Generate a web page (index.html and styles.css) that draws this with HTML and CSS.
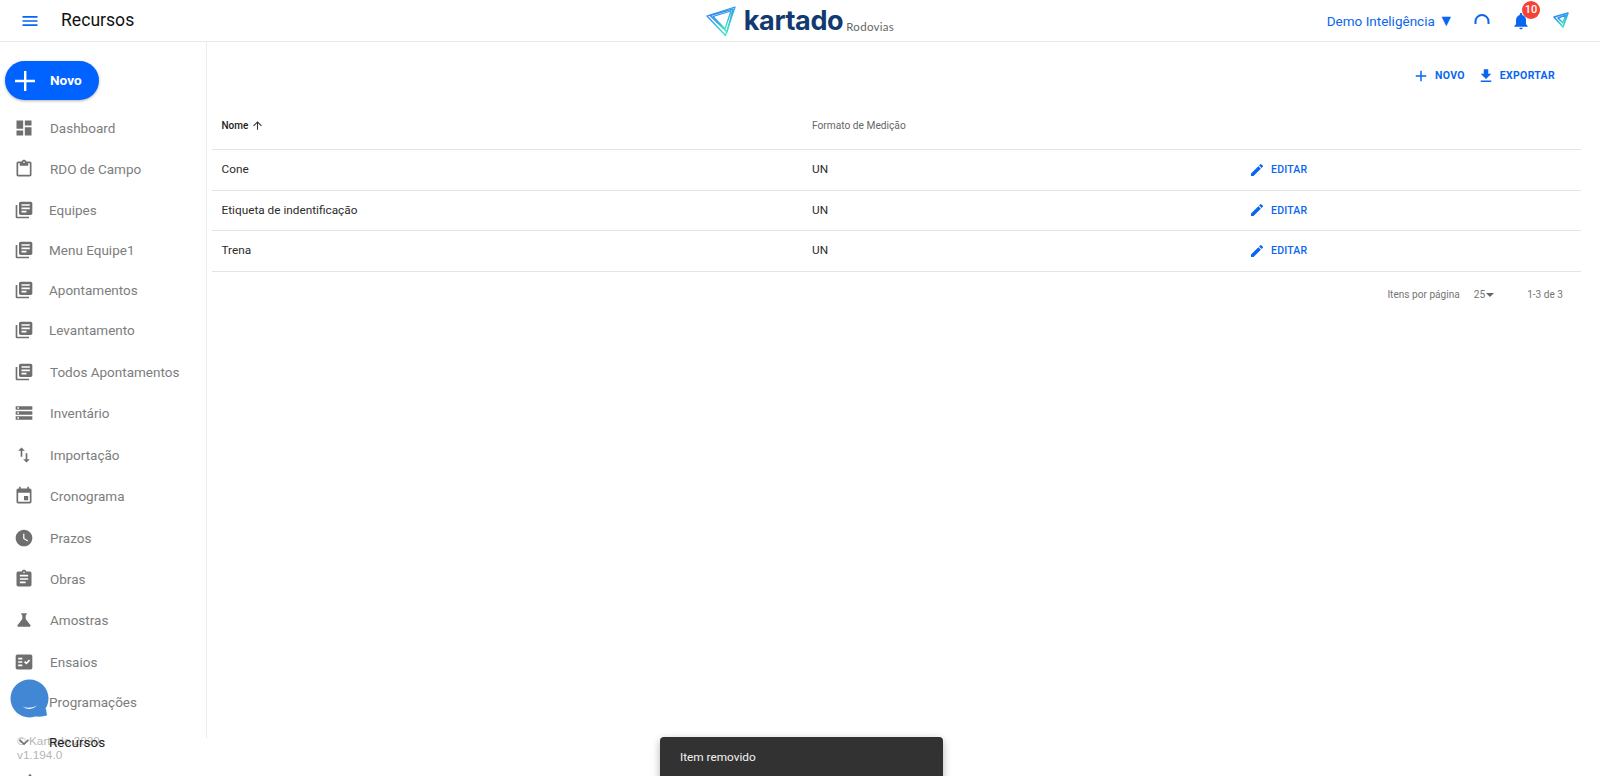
FILE: index.html
```html
<!DOCTYPE html>
<html lang="pt-BR">
<head>
<meta charset="utf-8">
<title>Recursos</title>
<link rel="stylesheet" href="styles.css">
</head>
<body>
<svg class="defs" aria-hidden="true">
  <defs>
    <linearGradient id="tri" x1="0" y1="0" x2="0.6" y2="1">
      <stop offset="0" stop-color="#2b78f5"/>
      <stop offset="0.55" stop-color="#2fa9e8"/>
      <stop offset="1" stop-color="#3fe3c4"/>
    </linearGradient>
    <symbol id="i-lib" viewBox="0 0 24 24"><path d="M4 6H2v14c0 1.100.9 2 2 2h14v-2H4V6zm16-4H8c-1.100 0-2 .9-2 2v12c0 1.100.9 2 2 2h12c1.100 0 2-.9 2-2V4c0-1.100-.9-2-2-2zm-1 9H9V9h10v2zm-4 4H9v-2h6v2zm4-8H9V5h10v2z"/></symbol>
    <symbol id="i-edit" viewBox="0 0 24 24"><path d="M3 17.250V21h3.750L17.810 9.940l-3.750-3.750L3 17.250zM20.710 7.040a1 1 0 0 0 0-1.410l-2.340-2.340a1 1 0 0 0-1.410 0l-1.830 1.830 3.750 3.750 1.830-1.830z"/></symbol>
  </defs>
</svg>

<header class="topbar">
  <div class="top-left">
    <svg class="menu-icon" viewBox="0 0 24 24"><path d="M3 18h18v-2H3v2zm0-5h18v-2H3v2zm0-7v2h18V6H3z"/></svg>
    <h1 class="page-title">Recursos</h1>
  </div>
  <div class="logo">
    <svg class="logo-mark" viewBox="0 0 30 30" fill="none" stroke="url(#tri)" stroke-width="1.300" stroke-linejoin="round">
      <path d="M1 10 L29 1 L19.500 29.500 Z"/>
      <path d="M4 9.500 L27 3 L21 26 Z"/>
      <path d="M7 10.500 L25 5 L19 23 Z"/>
    </svg>
    <span class="logo-name">kartado</span>
    <span class="logo-sub">Rodovias</span>
  </div>
  <div class="top-right">
    <span class="company">Demo Inteligência <span class="company-arrow">▼</span></span>
    <svg class="arc-icon" viewBox="0 0 16 16" fill="none"><path d="M1.500 11 V8.500 A6.500 6.500 0 0 1 14.500 8.500 V11" stroke-width="2"/></svg>
    <span class="bell-wrap">
      <svg class="bell-icon" viewBox="0 0 24 24"><path d="M12 22c1.100 0 2-.9 2-2h-4c0 1.100.9 2 2 2zm6-6v-5c0-3.070-1.630-5.640-4.500-6.320V4c0-.83-.67-1.500-1.500-1.500s-1.500.67-1.500 1.500v.68C7.640 5.360 6 7.920 6 11v5l-2 2v1h16v-1l-2-2z"/></svg>
      <span class="badge">10</span>
    </span>
    <svg class="send-icon" viewBox="0 0 16 16" fill="none" stroke="url(#tri)" stroke-width="1.600" stroke-linejoin="round"><path d="M1 5 L15 1 L10 15 Z"/><path d="M5 6 L13 3 L10 11 Z"/></svg>
  </div>
</header>

<div class="shell">
  <nav class="sidebar">
    <button class="new-btn">
      <svg class="new-plus" viewBox="0 0 20 20"><path d="M9 0h2.400v8.800H20v2.400h-8.600V20H9v-8.800H0V8.800h9z"/></svg>
      <span class="new-label">Novo</span>
    </button>
    <ul class="nav-list">
      <li class="nav-item wide"><svg class="nav-icon" viewBox="0 0 24 24"><path d="M3 13h8V3H3v10zm0 8h8v-6H3v6zm10 0h8V11h-8v10zm0-18v6h8V3h-8z"/></svg><span>Dashboard</span></li>
      <li class="nav-item wide"><svg class="nav-icon" viewBox="0 0 24 24"><path d="M19 3h-4.180C14.400 1.840 13.300 1 12 1s-2.400.84-2.820 2H5c-1.100 0-2 .9-2 2v14c0 1.100.9 2 2 2h14c1.100 0 2-.9 2-2V5c0-1.100-.9-2-2-2zm-7 0c.55 0 1 .45 1 1s-.45 1-1 1-1-.45-1-1 .45-1 1-1zm7 16H5V5h2v3h10V5h2v14z"/></svg><span>RDO de Campo</span></li>
      <li class="nav-item narrow"><svg class="nav-icon lib"><use href="#i-lib"/></svg><span>Equipes</span></li>
      <li class="nav-item narrow"><svg class="nav-icon lib"><use href="#i-lib"/></svg><span>Menu Equipe1</span></li>
      <li class="nav-item narrow"><svg class="nav-icon lib"><use href="#i-lib"/></svg><span>Apontamentos</span></li>
      <li class="nav-item narrow"><svg class="nav-icon lib"><use href="#i-lib"/></svg><span>Levantamento</span></li>
      <li class="nav-item wide"><svg class="nav-icon lib todos"><use href="#i-lib"/></svg><span>Todos Apontamentos</span></li>
      <li class="nav-item wide"><svg class="nav-icon" viewBox="0 0 24 24"><path d="M2 20h20v-4H2v4zm2-3h2v2H4v-2zM2 4v4h20V4H2zm4 3H4V5h2v2zm-4 7h20v-4H2v4zm2-3h2v2H4v-2z"/></svg><span>Inventário</span></li>
      <li class="nav-item wide"><svg class="nav-icon" viewBox="0 0 24 24"><path d="M16 17.010V10h-2v7.010h-3L15 21l4-3.990h-3zM9 3 5 6.990h3V14h2V6.990h3L9 3z"/></svg><span>Importação</span></li>
      <li class="nav-item wide"><svg class="nav-icon" viewBox="0 0 24 24"><path d="M17 12h-5v5h5v-5zM16 1v2H8V1H6v2H5c-1.110 0-2 .9-2 2v14c0 1.100.89 2 2 2h14c1.100 0 2-.9 2-2V5c0-1.100-.9-2-2-2h-1V1h-2zm3 18H5V8h14v11z"/></svg><span>Cronograma</span></li>
      <li class="nav-item wide"><svg class="nav-icon" viewBox="0 0 24 24"><path d="M11.990 2C6.470 2 2 6.480 2 12s4.470 10 9.990 10C17.520 22 22 17.520 22 12S17.520 2 11.990 2zm4.250 14.250L11 13V7h1.500v5.250l4.500 2.670-.76 1.330z"/></svg><span>Prazos</span></li>
      <li class="nav-item wide"><svg class="nav-icon" viewBox="0 0 24 24"><path d="M19 3h-4.180C14.400 1.840 13.300 1 12 1c-1.300 0-2.400.84-2.820 2H5c-1.100 0-2 .9-2 2v14c0 1.100.9 2 2 2h14c1.100 0 2-.9 2-2V5c0-1.100-.9-2-2-2zm-7 0c.55 0 1 .45 1 1s-.45 1-1 1-1-.45-1-1 .45-1 1-1zm2 14H7v-2h7v2zm3-4H7v-2h10v2zm0-4H7V7h10v2z"/></svg><span>Obras</span></li>
      <li class="nav-item wide"><svg class="nav-icon" viewBox="0 0 24 24"><path d="M19.800 18.400 14 10.670V6.500l1.350-1.690c.26-.33.03-.81-.39-.81H9.040c-.42 0-.65.480-.39.810L10 6.500v4.170L4.200 18.400c-.49.660-.02 1.600.8 1.600h14c.82 0 1.290-.94.800-1.600z"/></svg><span>Amostras</span></li>
      <li class="nav-item wide"><svg class="nav-icon" viewBox="0 0 24 24"><path fill-rule="evenodd" d="M20 3H4c-1.100 0-2 .9-2 2v14c0 1.100.9 2 2 2h16c1.100 0 2-.9 2-2V5c0-1.100-.9-2-2-2zM10 17H5v-2h5v2zm0-4H5v-2h5v2zm0-4H5V7h5v2zm4.820 6L12 12.160l1.410-1.410 1.410 1.420L17.990 9l1.420 1.420L14.820 15z"/></svg><span>Ensaios</span></li>
      <li class="nav-item narrow"><svg class="nav-icon lib"><use href="#i-lib"/></svg><span>Programações</span></li>
      <li class="nav-item narrow current"><svg class="nav-icon lib" viewBox="0 0 24 24"><path d="M7.410 8.590 12 13.170l4.590-4.580L18 10l-6 6-6-6z"/></svg><span>Recursos</span></li>
      <li class="nav-item narrow last"><svg class="nav-icon lib" viewBox="0 0 24 24"><path d="M12 2 6 10h12z"/></svg></li>
    </ul>
  </nav>

  <main class="content">
    <div class="actions">
      <button class="action"><svg class="action-icon" viewBox="0 0 24 24"><path d="M19 13h-6v6h-2v-6H5v-2h6V5h2v6h6v2z"/></svg>NOVO</button>
      <button class="action"><svg class="action-icon" viewBox="0 0 24 24"><path d="M19 9h-4V3H9v6H5l7 7 7-7zM5 18v2h14v-2H5z"/></svg>EXPORTAR</button>
    </div>
    <div class="table">
      <div class="row head">
        <div class="col-name"><b class="sorted">Nome</b><svg class="sort-icon" viewBox="0 0 24 24"><path d="M4 12l1.410 1.410L11 7.830V20h2V7.830l5.580 5.590L20 12l-8-8-8 8z"/></svg></div>
        <div class="col-format">Formato de Medição</div>
        <div class="col-act"></div>
      </div>
      <div class="row">
        <div class="col-name">Cone</div><div class="col-format">UN</div>
        <div class="col-act"><svg class="edit-icon"><use href="#i-edit"/></svg><span>EDITAR</span></div>
      </div>
      <div class="row">
        <div class="col-name">Etiqueta de indentificação</div><div class="col-format">UN</div>
        <div class="col-act"><svg class="edit-icon"><use href="#i-edit"/></svg><span>EDITAR</span></div>
      </div>
      <div class="row">
        <div class="col-name">Trena</div><div class="col-format">UN</div>
        <div class="col-act"><svg class="edit-icon"><use href="#i-edit"/></svg><span>EDITAR</span></div>
      </div>
    </div>
    <div class="pager">
      <span>Itens por página</span>
      <span class="page-size">25<i class="caret"></i></span>
      <span class="page-range">1-3 de 3</span>
    </div>
  </main>
</div>

<div class="copyright">© Kartado 2020<br>v1.194.0</div>
<div class="chat">
  <svg class="chat-svg" viewBox="0 0 40 40"><circle class="chat-bubble" cx="19.500" cy="19.500" r="19"/><path class="chat-bubble" d="M24 30 L36 30 L37 36.500 Q30 38.500 24 37 Z"/><path class="chat-smile" d="M12.500 27.500 Q20 30.500 27 26.500 Q20.500 33 12.500 27.500 Z"/></svg>
</div>
<div class="toast">Item removido</div>
</body>
</html>
```
FILE: styles.css
```css
* { box-sizing: border-box; }
html, body { margin: 0; height: 776px; overflow: hidden; background: #fff; }
body { font-family: Roboto, "Liberation Sans", sans-serif; color: #1f1f1f; display: flex; flex-direction: column; position: relative; }
.defs { position: absolute; width: 0; height: 0; }

.topbar { height: 42px; flex: none; display: grid; grid-template-columns: 1fr auto 1fr; align-items: center; border-bottom: 1px solid #e9e9e9; }
.top-left { display: flex; align-items: center; padding-left: 20px; }
.menu-icon { width: 20px; height: 20px; fill: #0a66f0; }
.page-title { margin: 0 0 1px 21px; font-size: 17.600px; font-weight: 400; color: #111; }

.logo { display: flex; align-items: center; }
.logo-mark { width: 30px; height: 30px; margin: 0 8px 0 0; }
.logo-name { font-family: Inter, sans-serif; font-weight: 700; font-size: 27px; line-height: 30px; letter-spacing: -0.4px; color: #133a70; }
.logo-sub { font-family: Lato, sans-serif; font-weight: 400; font-size: 11.500px; margin: 11px 0 0 3px; color: #666; letter-spacing: 0.3px; }

.top-right { display: flex; align-items: center; justify-content: flex-end; padding-right: 31px; color: #0a66f0; }
.company { font-size: 13.500px; margin-right: 20px; }
.company-arrow { font-size: 16px; }
.arc-icon { width: 16px; height: 16px; stroke: #0a66f0; margin: 0 21px 0 0; }
.bell-wrap { position: relative; display: flex; margin-right: 22px; }
.bell-icon { width: 20px; height: 20px; fill: #0a66f0; }
.badge { position: absolute; left: 11px; top: -10px; width: 18px; height: 18px; border-radius: 50%; background: #f44336; color: #fff; font-size: 11px; font-weight: 500; display: flex; align-items: center; justify-content: center; }
.send-icon { width: 16px; height: 16px; margin-bottom: 1px; }

.shell { flex: 1; display: flex; min-height: 0; }
.sidebar { width: 207px; height: 696px; flex: none; border-right: 1px solid #ececec; padding: 19px 0 0 5px; }
.new-btn { width: 94px; height: 39px; border: 0; border-radius: 20px; background: #0062ff; color: #fff; display: flex; align-items: center; padding: 0 0 0 10px; font: 700 13.600px Roboto, sans-serif; box-shadow: 0 1px 3px rgba(0,0,0,.3); }
.new-plus { width: 20px; height: 20px; fill: #fff; margin-right: 15px; }
.new-label { margin-bottom: 2px; }
.nav-list { list-style: none; margin: 7.400px 0 0; padding: 0 0 0 9px; }
.nav-item { display: flex; align-items: center; font-size: 13.500px; color: #7d7d7d; }
.nav-item.wide { height: 41.400px; }
.nav-item.narrow { height: 40.300px; padding-bottom: 1.500px; }
.nav-item.current { color: #222; position: relative; z-index: 1; }
.nav-item.last .nav-icon { margin-left: 6px; }
.nav-icon { width: 20px; height: 20px; flex: none; fill: #6f6f6f; margin-right: 16px; }
.nav-icon.lib { margin-right: 15px; }
.nav-icon.todos { margin-right: 16px; }

.content { flex: 1; min-width: 0; padding: 0 19px 0 5px; }
.actions { height: 64px; display: flex; justify-content: flex-end; align-items: center; padding: 3px 26px 0 0; gap: 12px; }
.action { display: flex; align-items: center; background: none; border: 0; padding: 0; font: 700 10.500px Roboto, sans-serif; letter-spacing: .3px; color: #0a66f0; }
.action-icon { width: 18px; height: 18px; fill: #0a66f0; margin-right: 5px; }

.row { display: grid; grid-template-columns: 590.500px 437px 1fr; align-items: center; height: 40.500px; padding: 0 0 1px 9.500px; border-bottom: 1px solid #e4e4e4; font-size: 11.800px; color: #2c2c2c; }
.row.head { height: 44px; padding-bottom: 4px; font-size: 10.200px; color: #666; }
.row > div { display: flex; align-items: center; }
.sorted { font-weight: 500; color: #222; font-size: 10px; }
.sort-icon { width: 13px; height: 13px; margin-left: 3px; fill: #333; }
.col-act { color: #0a66f0; font-size: 10.500px; font-weight: 500; letter-spacing: .2px; padding-top: 1px; }
.edit-icon { width: 16px; height: 16px; fill: #0a66f0; margin-right: 6px; }

.pager { display: flex; align-items: center; justify-content: flex-end; padding: 15px 18px 0 0; font-size: 10.100px; color: #757575; line-height: 16px; }
.page-size { display: flex; align-items: center; margin-left: 14px; }
.caret { width: 0; height: 0; border: 4px solid transparent; border-top-color: #666; border-bottom: 0; margin-left: 1px; }
.page-range { margin-left: 33px; }

.copyright { position: absolute; left: 17px; top: 734px; font: 11.800px/14px "Liberation Sans", sans-serif; color: #b5b5b5; }
.chat { position: absolute; left: 10px; top: 679px; width: 40px; height: 40px; z-index: 2; }
.chat-svg { display: block; width: 40px; height: 40px; }
.chat-bubble { fill: #4187d3; }
.chat-smile { fill: #fff; }

.toast { position: absolute; left: 660px; top: 737px; width: 283px; height: 50px; padding: 0 20px 11px; display: flex; align-items: center; background: #323232; border-radius: 4px; color: #f2f2f2; font-size: 11.800px; box-shadow: 0 3px 8px rgba(0,0,0,.3); }
```
